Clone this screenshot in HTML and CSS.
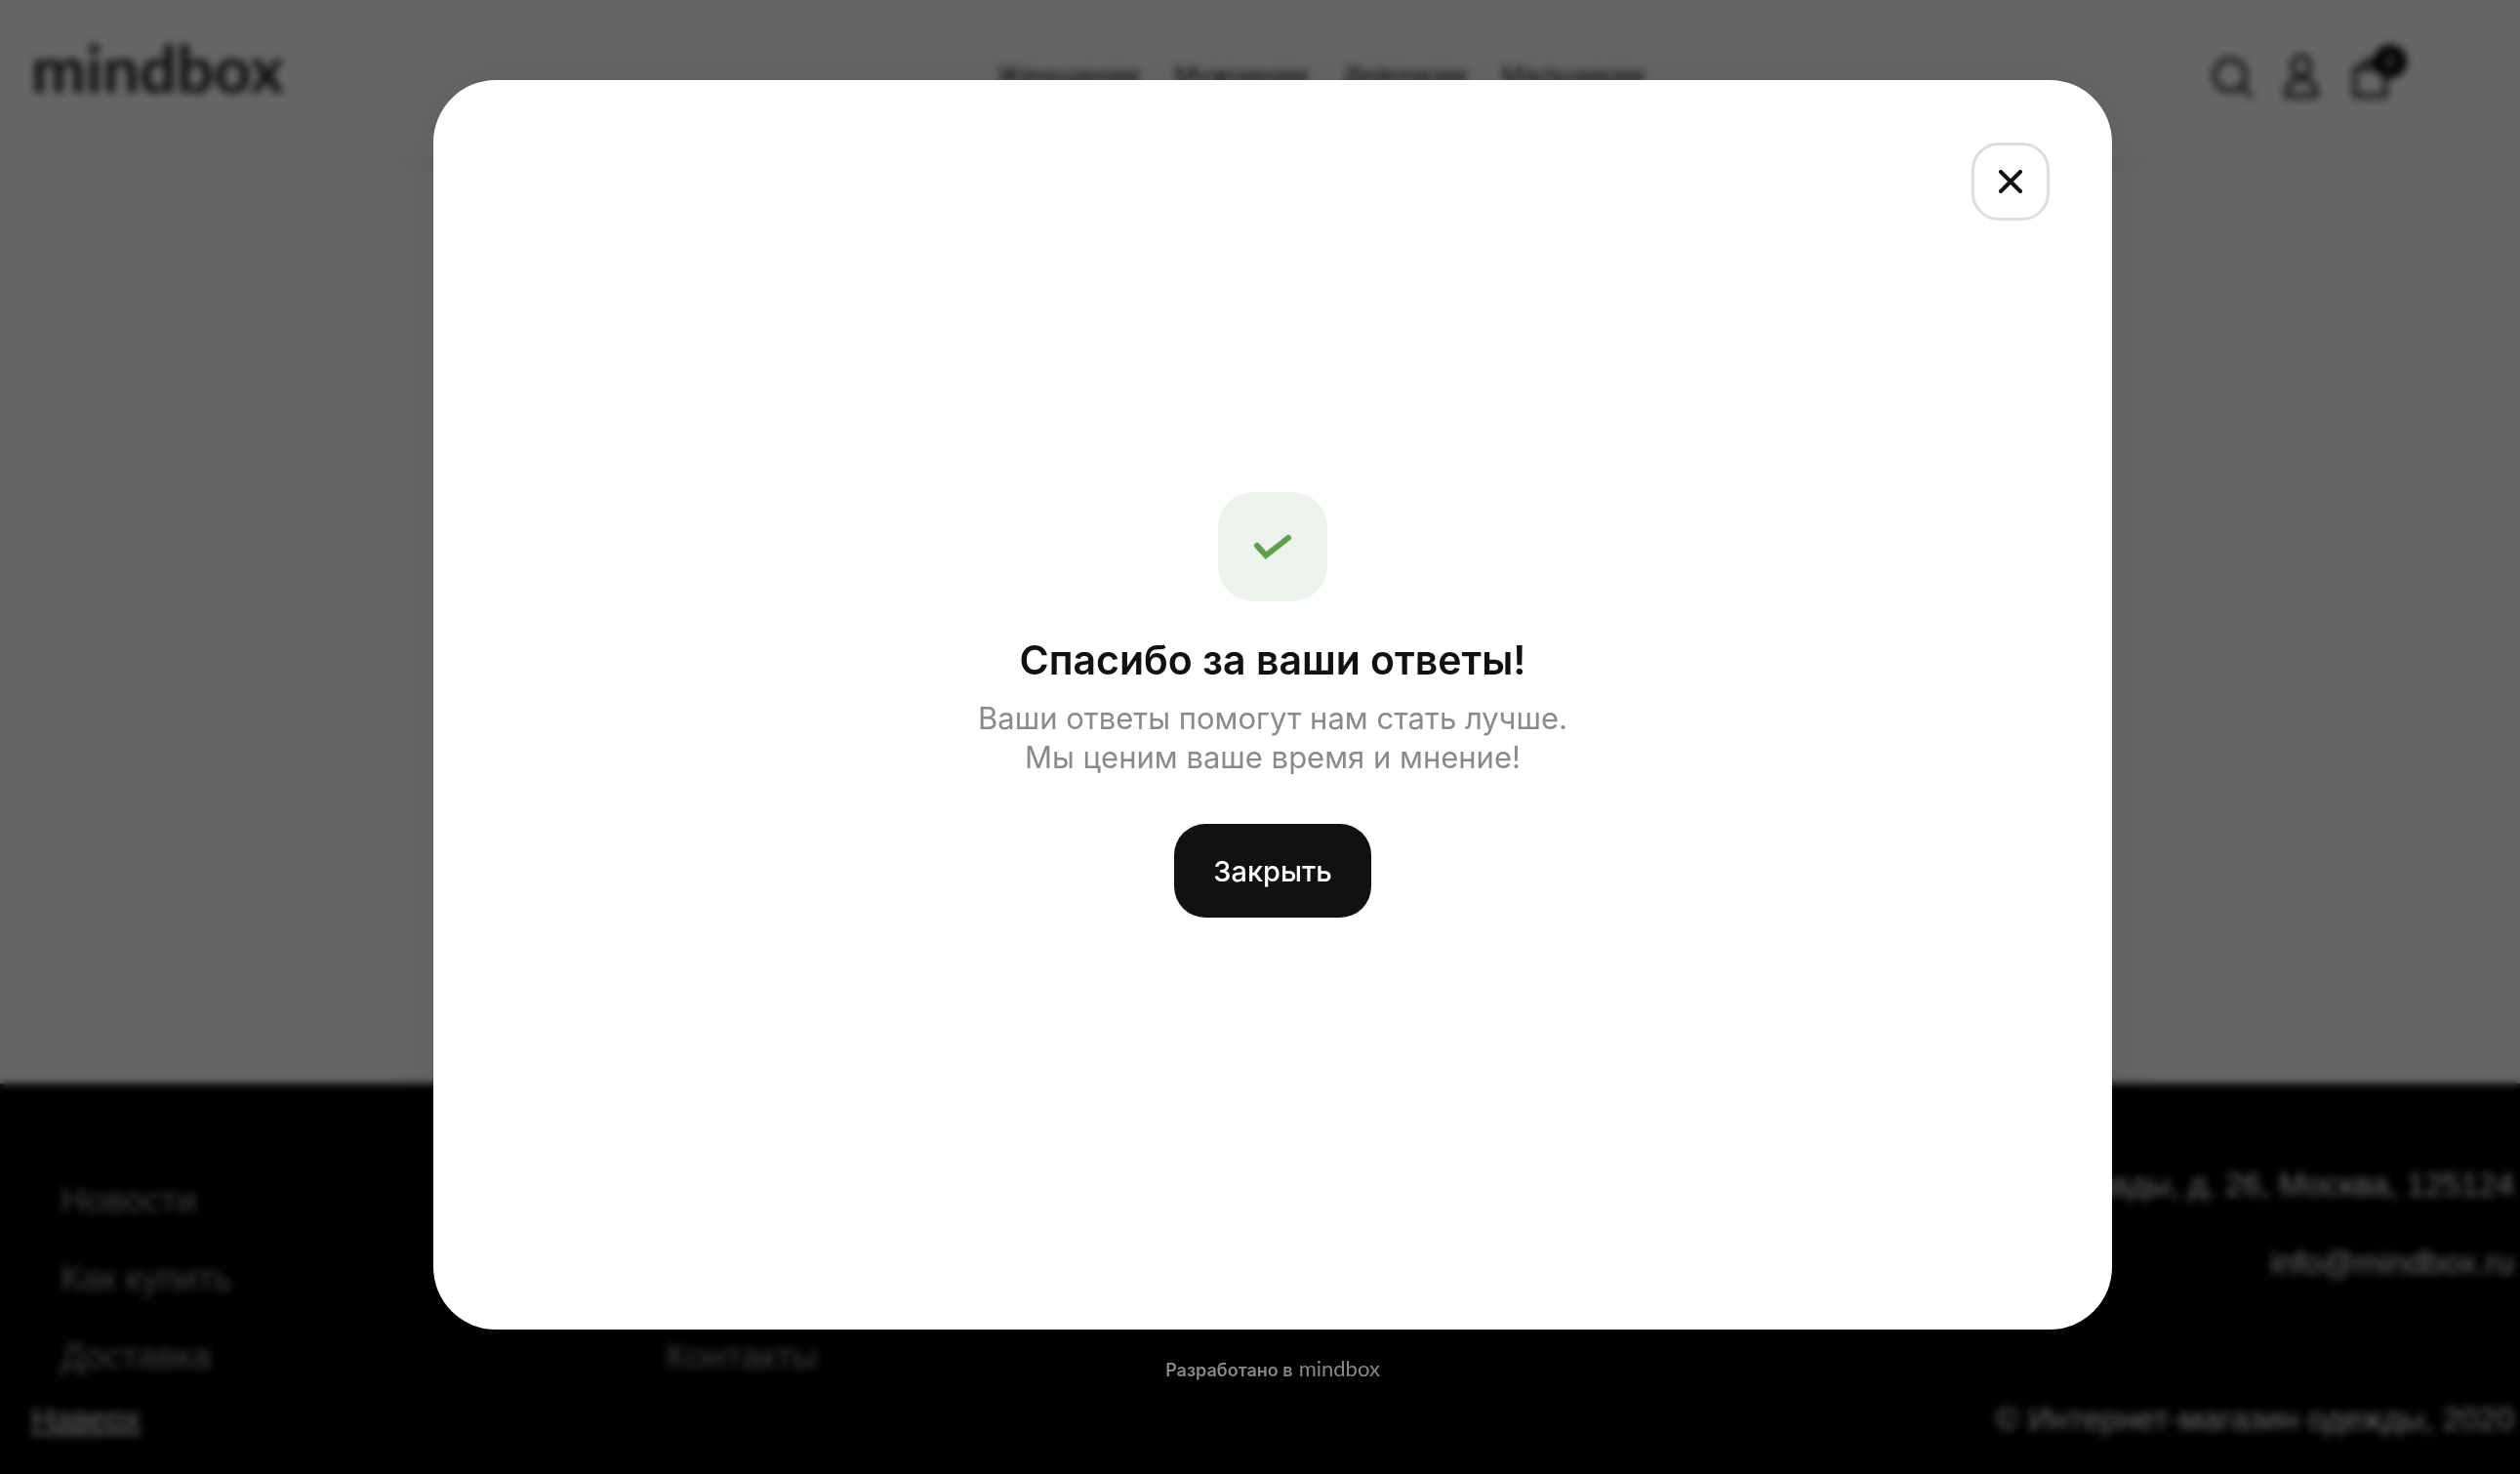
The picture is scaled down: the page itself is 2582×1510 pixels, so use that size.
FILE: index.html
```html
<!DOCTYPE html>
<html lang="ru">
<head>
    <meta charset="UTF-8">
    <meta name="viewport" content="width=device-width, initial-scale=1.0">
    <title>Mindbox</title>
    <link rel="stylesheet" href="styles.css">
</head>
<body>
    <div class="page">
        <header class="header">
            <a href="#" class="logo">mindbox</a>
            <nav class="nav">
                <a href="#">Женщинам</a>
                <a href="#">Мужчинам</a>
                <a href="#">Девочкам</a>
                <a href="#">Мальчикам</a>
            </nav>
            <div class="tools">
                <a href="#" class="tool" aria-label="Поиск">
                    <svg viewBox="0 0 48 48"><circle cx="23" cy="23" r="16"/><path d="M34 34l11 11"/></svg>
                </a>
                <a href="#" class="tool" aria-label="Профиль">
                    <svg viewBox="0 0 48 48"><ellipse cx="24" cy="14" rx="9" ry="10"/><path d="M24 26c-9 2-15 7-15 13v5h30v-5c0-6-6-11-15-13z"/></svg>
                </a>
                <a href="#" class="tool" aria-label="Корзина">
                    <svg viewBox="0 0 48 48"><path d="M7 16h31v28H7zM11 16l11-9 10 9"/></svg>
                    <span class="badge">0</span>
                </a>
            </div>
        </header>

        <main class="content"></main>

        <footer class="footer">
            <div class="footer-main">
                <ul class="footer-links">
                    <li><a href="#">Новости</a></li>
                    <li><a href="#">Как купить</a></li>
                    <li><a href="#">Доставка</a></li>
                </ul>
                <ul class="footer-links">
                    <li><a href="#">Контакты</a></li>
                </ul>
                <address class="footer-contacts">
                    <span>ул. Правды, д. 26, Москва, 125124</span>
                    <a href="#">info@mindbox.ru</a>
                </address>
            </div>
            <div class="footer-bottom">
                <a href="#" class="to-top">Наверх</a>
                <span>© Интернет-магазин одежды, 2020</span>
            </div>
        </footer>
    </div>

    <div class="overlay">
        <div class="modal" role="dialog" aria-modal="true" aria-labelledby="modal-title">
            <button type="button" class="modal-close" aria-label="Закрыть окно">
                <svg viewBox="0 0 24 24"><path d="M2 2l20 20M22 2L2 22"/></svg>
            </button>
            <div class="check">
                <svg viewBox="0 0 48 48"><path d="M8 23l9 10 23-18"/></svg>
            </div>
            <h1 class="modal-title" id="modal-title">Спасибо за ваши ответы!</h1>
            <p class="modal-text">Ваши ответы помогут нам стать лучше.<br>Мы ценим ваше время и мнение!</p>
            <button type="button" class="modal-button">Закрыть</button>
        </div>
        <p class="credit">Разработано в <a href="#" class="credit-logo">mindbox</a></p>
    </div>
</body>
</html>
```

FILE: styles.css
```css
* {
    box-sizing: border-box;
}

body {
    margin: 0;
    background-color: #fff;
    font-family: "Liberation Sans", Arial, sans-serif;
    font-size: 33px;
}

a {
    color: inherit;
    text-decoration: none;
}

/* Shop page behind the modal */
.page {
    display: flex;
    flex-direction: column;
    min-height: 100vh;
}

.header {
    display: grid;
    grid-template-columns: 9fr auto 7fr;
    align-items: center;
    height: 164px;
    padding: 0 128px 8px 32px;
    box-shadow: 0 2px 6px rgba(0, 0, 0, 0.1);
}

.logo {
    color: #222;
    font-family: Lato, sans-serif;
    font-size: 67px;
    font-weight: 700;
    line-height: 80px;
    padding-bottom: 18px;
}

.nav {
    display: flex;
    gap: 36px;
    color: #222;
    font-size: 28px;
}

.tools {
    display: flex;
    justify-content: flex-end;
    gap: 24px;
}

.tool {
    position: relative;
    width: 48px;
    height: 48px;
}

.tool svg {
    display: block;
    fill: none;
    stroke: #333;
    stroke-width: 5;
}

/* Cart counter */
.badge {
    position: absolute;
    top: -8px;
    right: -12px;
    width: 34px;
    height: 34px;
    border-radius: 50%;
    background-color: #000;
    color: #fff;
    font-size: 20px;
    line-height: 34px;
    text-align: center;
}

.content {
    flex: 1;
}

/* Footer */
.footer {
    background-color: #000;
    color: #fff;
    padding: 64px 6px 32px 32px;
}

.footer-main {
    display: grid;
    grid-template-columns: 10fr 10fr 21fr;
    height: 256px;
}

.footer-links {
    display: flex;
    flex-direction: column;
    justify-content: flex-end;
    list-style: none;
    margin: 0;
    padding: 0 30px;
    color: #999;
    font-size: 36px;
    line-height: 80px;
}

.footer-contacts {
    display: flex;
    flex-direction: column;
    font-style: normal;
    line-height: 80px;
    text-align: right;
}

.footer-bottom {
    display: flex;
    justify-content: space-between;
    line-height: 48px;
}

.to-top {
    text-decoration: underline;
}

/* Dimmed and blurred layer over the page */
.overlay {
    position: fixed;
    inset: 0;
    display: flex;
    flex-direction: column;
    align-items: center;
    justify-content: center;
    padding-left: 26px;
    background-color: rgba(0, 0, 0, 0.6);
    backdrop-filter: blur(4px);
    font-family: Inter, sans-serif;
}

.modal {
    position: relative;
    display: flex;
    flex-direction: column;
    align-items: center;
    justify-content: center;
    width: 90%;
    max-width: 1720px;
    height: 85vh;
    max-height: 1280px;
    border-radius: 64px;
    background-color: #fff;
    box-shadow: 0 0 64px rgba(0, 0, 0, 0.1);
    text-align: center;
}

.modal-close {
    position: absolute;
    top: 64px;
    right: 64px;
    display: grid;
    place-items: center;
    width: 80px;
    height: 80px;
    padding: 0;
    border: 3px solid #dedede;
    border-radius: 28px;
    background-color: #fff;
    cursor: pointer;
}

.modal-close svg {
    width: 24px;
    height: 24px;
    fill: none;
    stroke: #111;
    stroke-width: 4;
    stroke-linecap: round;
}

.check {
    display: grid;
    place-items: center;
    width: 112px;
    height: 112px;
    border-radius: 36px;
    background-color: #ebf3eb;
}

.check svg {
    width: 48px;
    height: 48px;
    fill: none;
    stroke: #5fa147;
    stroke-width: 6;
    stroke-linecap: round;
}

.modal-title {
    margin: 32px 0 12px;
    color: #111;
    font-size: 41px;
    font-weight: 600;
    line-height: 56px;
}

.modal-text {
    margin: 0 0 48px;
    color: #8a8a8e;
    font-size: 31px;
    line-height: 40px;
}

.modal-button {
    height: 96px;
    padding: 0 40px;
    border: none;
    border-radius: 32px;
    background-color: #111;
    color: #fff;
    font-family: inherit;
    font-size: 29px;
    font-weight: 500;
    cursor: pointer;
}

.credit {
    display: flex;
    align-items: baseline;
    gap: 6px;
    height: 66px;
    margin: 0;
    padding-top: 24px;
    color: #8a8a8e;
    font-size: 18px;
    font-weight: 600;
    line-height: 32px;
}

.credit-logo {
    font-family: Lato, sans-serif;
    font-size: 22px;
    font-weight: 400;
}
```
